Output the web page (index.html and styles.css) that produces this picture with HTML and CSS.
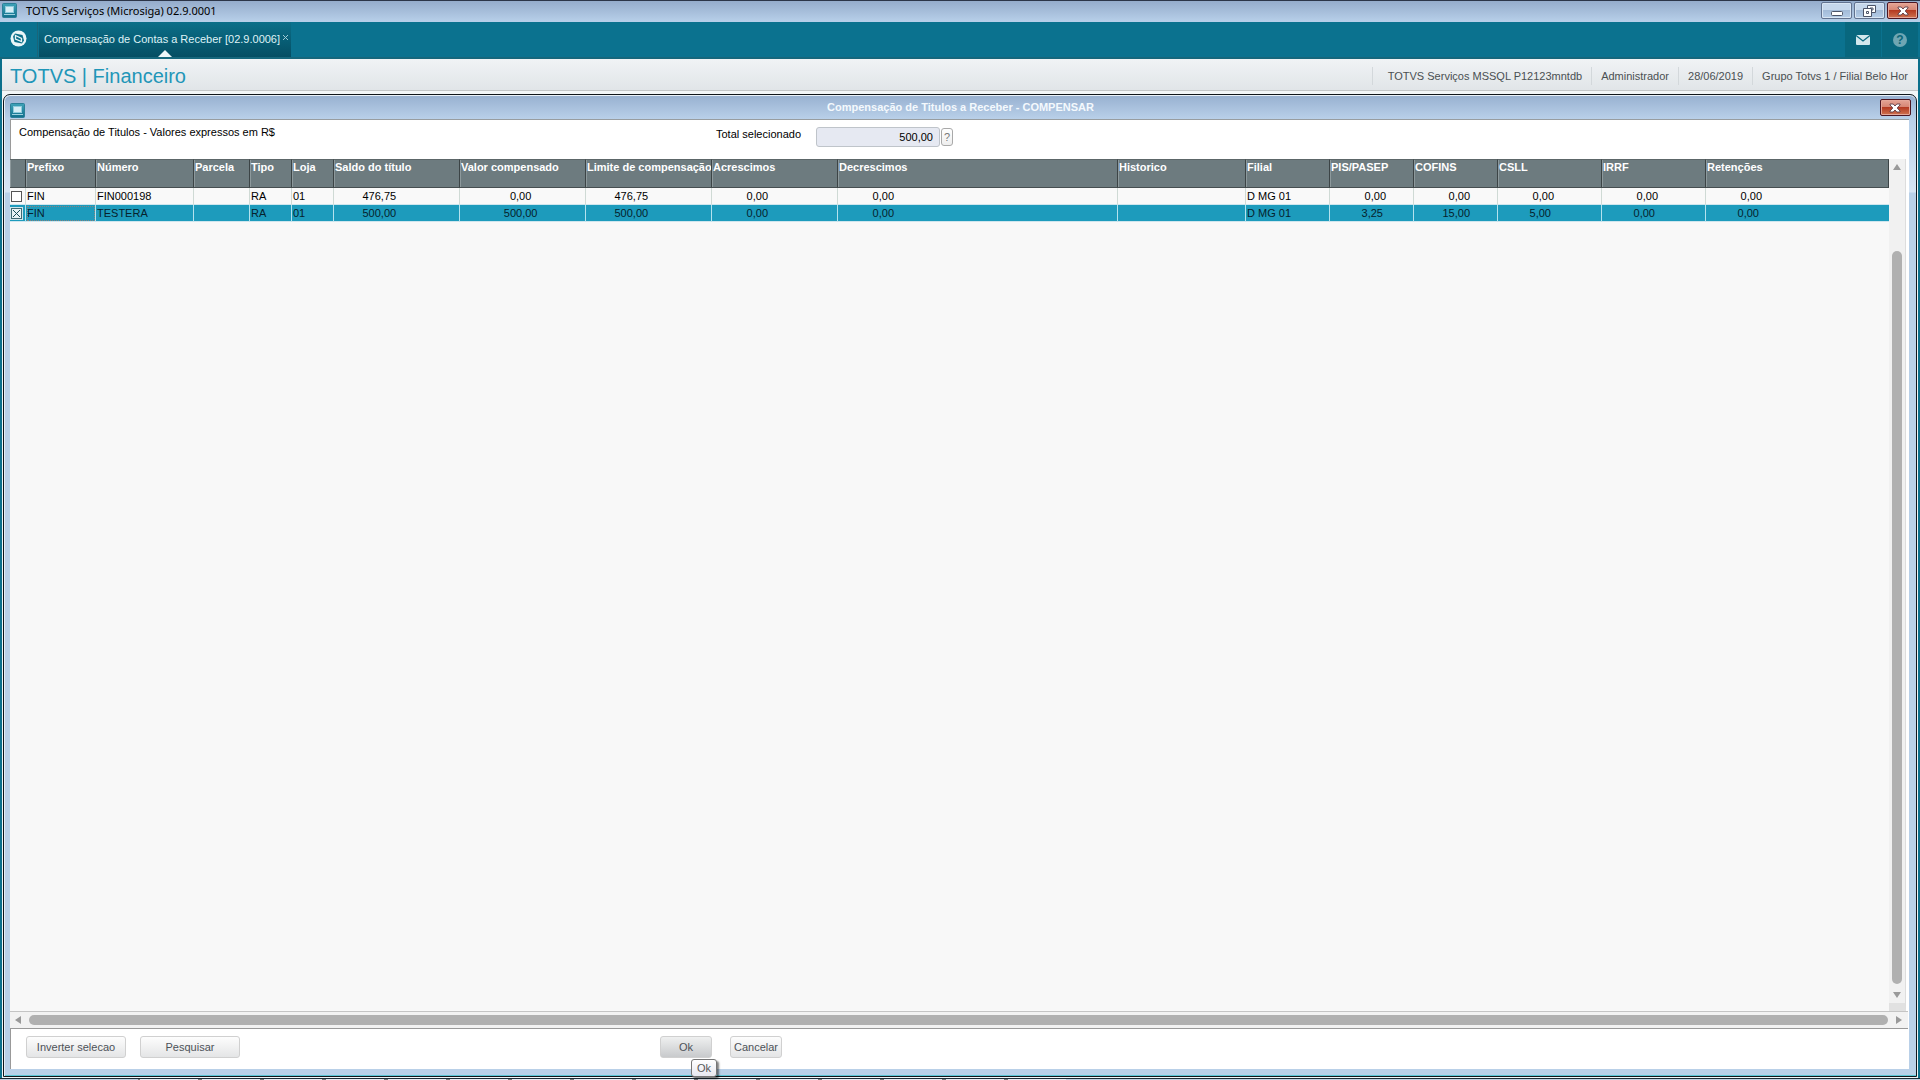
FILE: index.html
```html
<!DOCTYPE html>
<html lang="pt-BR">
<head>
    <meta charset="UTF-8">
    <meta name="viewport" content="width=device-width, initial-scale=1.0">
    <title>TOTVS Serviços (Microsiga) 02.9.0001</title>
    <link rel="stylesheet" href="styles.css">
</head>
<body>
    <svg width="0" height="0" class="sprites" aria-hidden="true">
        <linearGradient id="appGrad" x1="0" y1="0" x2="0" y2="1">
            <stop offset="0" stop-color="#3fa3b8"/>
            <stop offset="1" stop-color="#11708c"/>
        </linearGradient>
        <symbol id="app" viewBox="0 0 15 15">
            <rect x="0.5" y="0.5" width="14" height="14" rx="1" fill="url(#appGrad)" stroke="#2b7f98"/>
            <rect x="3.500" y="3.500" width="8" height="6" fill="#d5edf5" stroke="#8fcbdc"/>
            <rect x="2" y="11" width="11" height="1" fill="#9fd2e0"/>
        </symbol>
        <symbol id="cross" viewBox="0 0 12 10">
            <path d="M1 1h3.200L6 3 7.800 1H11v1L8.200 5 11 8v1H7.800L6 7 4.200 9H1V8l2.800-3L1 2z" fill="#fff" stroke="#5b3a44" stroke-width="0.900"/>
        </symbol>
    </svg>

    <div class="titlebar">
        <svg class="app-icon"><use href="#app"/></svg>
        <span class="titlebar-text">TOTVS Serviços (Microsiga) 02.9.0001</span>
        <div class="window-buttons">
            <button class="win-btn" aria-label="Minimizar">
                <svg width="12" height="10" viewBox="0 0 12 10"><rect x="0.5" y="5.5" width="11" height="4" rx="1" fill="#fff" stroke="#4c5468"/></svg>
            </button>
            <button class="win-btn" aria-label="Restaurar">
                <svg width="13" height="12" viewBox="0 0 13 12" fill="#fff" stroke="#4c5468"><path d="M4.500 0.500h8v7h-8z"/><path d="M7 3h3v2H7z"/><path d="M0.500 3.500h8v8h-8z"/><path d="M3.500 6.500h2v2h-2z"/></svg>
            </button>
            <button class="win-btn close" aria-label="Fechar"><svg width="12" height="10"><use href="#cross"/></svg></button>
        </div>
    </div>

    <div class="tabbar">
        <button class="home-btn" aria-label="Início">
            <svg width="17" height="17" viewBox="0 0 17 17">
                <circle cx="8.500" cy="8.500" r="8" fill="#eaf6f8"/>
                <path d="M3 6.500 5 3.500 12.500 5 14 10.500 12 13.500 4.500 12z" fill="#0b6f89"/>
                <path d="M5.500 5.500 11.500 8.500 11.500 11.500 5.500 9z" fill="#0b6f89" stroke="#eaf6f8" stroke-width="1.300"/>
            </svg>
        </button>
        <div class="tab">
            <span>Compensação de Contas a Receber [02.9.0006]</span>
            <button class="tab-close" aria-label="Fechar aba">
                <svg width="7" height="7" viewBox="0 0 7 7"><path d="M1 1l5 5M6 1L1 6" stroke="#9fcbd5"/></svg>
            </button>
        </div>
        <div class="tabbar-icons">
            <button aria-label="Mensagens">
                <svg width="14" height="10" viewBox="0 0 14 10"><rect width="14" height="10" rx="1" fill="#d3e8ed"/><path d="M0 0.500 7 6l7-5.500" fill="none" stroke="#0a687f" stroke-width="1.300"/></svg>
            </button>
            <button aria-label="Ajuda"><span class="help-dot">?</span></button>
        </div>
    </div>

    <div class="module-header">
        <h1>TOTVS | Financeiro</h1>
        <ul class="session-info">
            <li>TOTVS Serviços MSSQL P12123mntdb</li>
            <li>Administrador</li>
            <li>28/06/2019</li>
            <li>Grupo Totvs 1 / Filial Belo Hor</li>
        </ul>
    </div>

    <div class="workspace">
        <div class="dialog">
            <div class="dialog-title">
                <svg class="app-icon"><use href="#app"/></svg>
                <h2>Compensação de Titulos a Receber - COMPENSAR</h2>
                <button class="win-btn close" aria-label="Fechar"><svg width="12" height="10"><use href="#cross"/></svg></button>
            </div>

            <div class="dialog-body">
                <div class="summary">
                    <p>Compensação de Titulos - Valores expressos em R$</p>
                    <label for="total">Total selecionado</label>
                    <input type="text" id="total" value="500,00" readonly>
                    <button class="field-help">?</button>
                </div>

                <div class="grid-area">
                    <div class="grid-scroll">
                        <table class="grid">
                            <colgroup>
                                <col class="w-check"><col class="w-prefixo"><col class="w-numero"><col class="w-parcela">
                                <col class="w-code"><col class="w-code">
                                <col class="w-value"><col class="w-value"><col class="w-value"><col class="w-value">
                                <col class="w-decrescimos"><col class="w-historico">
                                <col class="w-tax"><col class="w-tax"><col class="w-tax">
                                <col class="w-ret"><col class="w-ret"><col>
                            </colgroup>
                            <thead>
                                <tr>
                                    <th></th><th>Prefixo</th><th>Número</th><th>Parcela</th><th>Tipo</th><th>Loja</th>
                                    <th>Saldo do título</th><th>Valor compensado</th><th>Limite de compensação</th>
                                    <th>Acrescimos</th><th>Decrescimos</th><th>Historico</th><th>Filial</th>
                                    <th>PIS/PASEP</th><th>COFINS</th><th>CSLL</th><th>IRRF</th><th>Retenções</th>
                                </tr>
                            </thead>
                            <tbody>
                                <tr>
                                    <td><input type="checkbox" aria-label="FIN000198"></td>
                                    <td>FIN</td><td>FIN000198</td><td></td><td>RA</td><td>01</td>
                                    <td>         476,75</td><td>                0,00</td><td>         476,75</td>
                                    <td>           0,00</td><td>           0,00</td><td></td><td>D MG 01</td>
                                    <td>           0,00</td><td>           0,00</td><td>           0,00</td><td>           0,00</td><td>           0,00</td>
                                </tr>
                                <tr class="selected">
                                    <td><input type="checkbox" aria-label="TESTERA" checked></td>
                                    <td class="focused">FIN</td><td>TESTERA</td><td></td><td>RA</td><td>01</td>
                                    <td>         500,00</td><td>              500,00</td><td>         500,00</td>
                                    <td>           0,00</td><td>           0,00</td><td></td><td>D MG 01</td>
                                    <td>          3,25</td><td>         15,00</td><td>          5,00</td><td>          0,00</td><td>          0,00</td>
                                </tr>
                            </tbody>
                        </table>
                    </div>
                    <div class="vscroll">
                        <span class="arrow up"></span>
                        <span class="thumb"></span>
                        <span class="arrow down"></span>
                    </div>
                </div>
                <div class="hscroll">
                    <span class="arrow left"></span>
                    <span class="thumb"></span>
                    <span class="arrow right"></span>
                </div>

                <div class="actions">
                    <button class="btn wide">Inverter selecao</button>
                    <button class="btn wide">Pesquisar</button>
                    <div class="confirm">
                        <button class="btn hover">Ok<span class="tooltip">Ok</span></button>
                        <button class="btn">Cancelar</button>
                    </div>
                </div>
            </div>
        </div>
    </div>
    <div class="taskbar"><div class="tasks"></div></div>
</body>
</html>
```
FILE: styles.css
```css
* {
    box-sizing: border-box;
}

body {
    margin: 0;
    height: 100vh;
    display: flex;
    flex-direction: column;
    overflow: hidden;
    font-family: "Liberation Sans", Arial, sans-serif;
    font-size: 11px;
    line-height: 14px;
    color: #000;
    background: #0b6f8b;
}

button, input {
    font: inherit;
    margin: 0;
    padding: 0;
}

svg {
    display: block;
}

.sprites {
    position: absolute;
}

/* main window */
.titlebar {
    height: 22px;
    flex: none;
    display: flex;
    align-items: center;
    padding: 0 2px 2px;
    border-top: 1px solid #2c3548;
    background: linear-gradient(#95accb, #b8d0ea);
}

.app-icon {
    width: 15px;
    height: 15px;
    flex: none;
}

.titlebar-text {
    margin-left: 9px;
    font-family: "Noto Sans", sans-serif;
    font-size: 11px;
}

.window-buttons {
    display: flex;
    gap: 2px;
    margin-left: auto;
}

.win-btn {
    width: 31px;
    height: 17px;
    display: flex;
    align-items: center;
    justify-content: center;
    border: 1px solid #62728f;
    border-radius: 2px;
    background: linear-gradient(#c6d7eb 50%, #a3bbd8 50%, #b5cde8);
    box-shadow: inset 0 0 0 1px #d8e5f3;
}

.win-btn.close {
    border-color: #4d1622;
    background: linear-gradient(#e5a596, #d58371 50%, #b53b22 50%, #cf7350);
    box-shadow: inset 0 0 0 1px #e5a799;
}

.tabbar {
    height: 37px;
    flex: none;
    display: flex;
    padding: 0 2px;
    border-bottom: 2px solid #16677c;
    background: #0b728f;
}

.home-btn {
    width: 36px;
    border: none;
    border-right: 1px solid #1b6579;
    padding: 0 0 2px 8px;
    background: none;
}

.tab {
    position: relative;
    display: flex;
    align-items: center;
    gap: 2px;
    margin-left: 1px;
    padding: 0 2px 2px 5px;
    color: #dff3f7;
    background: linear-gradient(#0b6f89, #054e63);
}

.tab::after {
    content: "";
    position: absolute;
    left: 50%;
    bottom: 0;
    margin-left: -7px;
    border: 7px solid transparent;
    border-top: none;
    border-bottom-color: #eef5f7;
}

.tab-close {
    border: none;
    background: none;
    padding-bottom: 2px;
}

.tabbar-icons {
    display: flex;
    gap: 1px;
    margin-left: auto;
}

.tabbar-icons button {
    width: 36px;
    display: flex;
    align-items: center;
    justify-content: center;
    border: none;
    background: #08677e;
}

.help-dot {
    width: 14px;
    height: 14px;
    border-radius: 50%;
    font-size: 12px;
    font-weight: bold;
    color: #0b6578;
    background: #6fa6b3;
}

.module-header {
    height: 32px;
    flex: none;
    display: flex;
    align-items: center;
    justify-content: space-between;
    margin: 0 2px;
    padding: 0 10px 0 8px;
    border-bottom: 1px solid #c3c6c8;
    background: linear-gradient(#f0f3f5, #e1e5e8);
}

.module-header h1 {
    margin: 0;
    padding-top: 2px;
    font-size: 20px;
    line-height: 24px;
    font-weight: normal;
    color: #1f96b8;
}

.session-info {
    display: flex;
    margin: 0;
    padding: 3px 0 0;
    list-style: none;
    color: #4a4f52;
}

.session-info li {
    padding: 2px 9px;
    border-left: 1px solid #d3d8db;
}

.session-info li:first-child {
    padding-left: 15px;
}

.session-info li:last-child {
    padding-right: 0;
}

/* dialog */
.workspace {
    flex: 1;
    min-height: 0;
    display: flex;
    margin: 0 2px;
    padding: 3px 1px 1px;
    background: #f2f6f8;
}

.dialog {
    flex: 1;
    min-width: 0;
    display: flex;
    flex-direction: column;
    padding: 0 7px 7px 6px;
    border: 1px solid #10161c;
    border-radius: 7px 7px 0 0;
    background: linear-gradient(#97b0d0, #b9d0e9 24px, #d7e5f4 97px, #b9d0e8 98px);
    box-shadow: inset 0 1px 0 #e9f1f8, inset 1px 0 0 #e4eef6, inset 0 -1px 0 #5cc6d6;
}

.dialog-title {
    height: 24px;
    flex: none;
    display: flex;
    justify-content: space-between;
    align-items: flex-start;
    padding: 4px 0 0;
}

.dialog-title .app-icon {
    margin-top: 4px;
}

.dialog-title h2 {
    margin: 0;
    padding-left: 16px;
    font-size: 11px;
    line-height: 16px;
    color: #f4f9fd;
}

.dialog-title .win-btn {
    margin-right: -2px;
}

.dialog-body {
    flex: 1;
    min-height: 0;
    display: flex;
    flex-direction: column;
    border-top: 1px solid #989da0;
    background: #fff;
}

.summary {
    height: 39px;
    flex: none;
    display: flex;
    align-items: flex-start;
    padding: 7px 9px 0 8px;
    border-left: 1px solid #9a9a9a;
}

.summary p {
    width: 697px;
    margin: 0;
    line-height: 10px;
}

.summary label {
    width: 100px;
}

.summary input {
    width: 124px;
    height: 20px;
    padding: 0 6px;
    border: 1px solid #bfc4ca;
    border-radius: 3px;
    text-align: right;
    background: #e6e9f2;
}

.field-help {
    width: 12px;
    height: 18px;
    margin: 1px 0 0 1px;
    border: 1px solid #a9a9a9;
    border-radius: 3px;
    color: #777;
    background: linear-gradient(#fff, #eee);
}

.grid-area {
    flex: 1;
    min-height: 0;
    display: flex;
    padding-right: 3px;
}

.grid-scroll {
    flex: 1;
    min-width: 0;
    overflow: hidden;
    background: #f8f8f8;
}

.grid {
    width: 100%;
    table-layout: fixed;
    border-collapse: separate;
    border-spacing: 0;
}

.w-check { width: 16px; }
.w-prefixo { width: 70px; }
.w-numero { width: 98px; }
.w-parcela { width: 56px; }
.w-code { width: 42px; }
.w-value { width: 126px; }
.w-decrescimos { width: 280px; }
.w-historico { width: 128px; }
.w-tax { width: 84px; }
.w-ret { width: 104px; }

.grid th {
    height: 29px;
    padding: 0 0 0 1px;
    overflow: hidden;
    border-top: 1px solid #5c6668;
    border-right: 1px solid #3c4446;
    border-bottom: 1px solid #464e50;
    text-align: left;
    vertical-align: top;
    white-space: nowrap;
    color: #fff;
    background: #6d7b7f;
    box-shadow: inset 1px 0 0 #8d999c;
}

.grid td {
    height: 17px;
    padding: 0 0 0 1px;
    overflow: hidden;
    border-right: 1px solid #cfdad5;
    border-bottom: 1px solid #cfe6ee;
    line-height: 16px;
    white-space: pre;
    background: #f9f9f9;
}

.grid td:last-child {
    border-right: none;
}

.grid .selected td {
    border-right-color: #b5e2ee;
    color: #06222c;
    background: #1d9bbc;
}

.grid .selected .focused {
    outline: 1px dotted #8b8480;
    outline-offset: -2px;
}

.grid input {
    appearance: none;
    display: block;
    width: 11px;
    height: 11px;
    border: 1px solid #555;
    background: #fff;
}

.grid input:checked {
    border-color: #3f6972;
    background:
        linear-gradient(45deg, transparent 44%, #174d58 44% 56%, transparent 56%) center / 7px 7px no-repeat,
        linear-gradient(-45deg, transparent 44%, #174d58 44% 56%, transparent 56%) center / 7px 7px no-repeat,
        #e8f3f5;
    box-shadow: 0 0 0 1px #cfe6ec;
}

/* scrollbars */
.vscroll {
    width: 17px;
    display: flex;
    flex-direction: column;
    align-items: center;
    padding: 5px 1px 5px 0;
    border-right: 1px solid #ddd;
    border-bottom: 8px solid #e1e1e1;
    background: #f1f1f1;
}

.thumb {
    border-radius: 5px;
    background: #b0b0b0;
}

.vscroll .thumb {
    flex: 1;
    width: 10px;
    margin: 81px 0 8px;
}

.arrow {
    flex: none;
    border: 4px solid transparent;
}

.arrow.up {
    border-top: none;
    border-bottom: 6px solid #999;
}

.arrow.down {
    border-bottom: none;
    border-top: 6px solid #999;
}

.arrow.left {
    border-left: none;
    border-right: 6px solid #999;
}

.arrow.right {
    border-right: none;
    border-left: 6px solid #999;
}

.hscroll {
    height: 18px;
    flex: none;
    display: flex;
    align-items: center;
    padding: 0 6px 0 5px;
    margin-right: 1px;
    border-top: 1px solid #c4c4c4;
    border-bottom: 1px solid #999;
    background: #f2f2f2;
}

.hscroll .thumb {
    flex: 1;
    height: 10px;
    margin: 0 8px;
}

/* footer */
.actions {
    height: 40px;
    flex: none;
    display: flex;
    gap: 14px;
    padding: 7px 15px 0;
    border-left: 1px solid #999;
}

.btn {
    position: relative;
    width: 52px;
    height: 22px;
    border: 1px solid #d0d0d0;
    border-radius: 3px;
    color: #4d5258;
    background: linear-gradient(#fdfdfd, #e4e5e6);
}

.btn.wide {
    width: 100px;
}

.btn.hover {
    background: linear-gradient(#eff0f0, #c8cacc);
}

.confirm {
    display: flex;
    gap: 18px;
    margin-left: 406px;
}

.tooltip {
    position: absolute;
    left: 30px;
    top: 22px;
    padding: 1px 5px;
    border: 1px solid #767676;
    border-radius: 3px;
    color: #575757;
    background: linear-gradient(#fff, #e8e8f0);
    box-shadow: 2px 2px 2px rgba(0, 0, 0, 0.5);
}

.taskbar {
    height: 2px;
    flex: none;
    padding-left: 138px;
    background: #c0cddf;
    border-top: 1px solid #1b2a35;
}

.tasks {
    height: 1px;
    width: 928px;
    background: repeating-linear-gradient(90deg, #777 0 2px, #e8e8f0 2px 60px, #777 60px 62px);
}
```
